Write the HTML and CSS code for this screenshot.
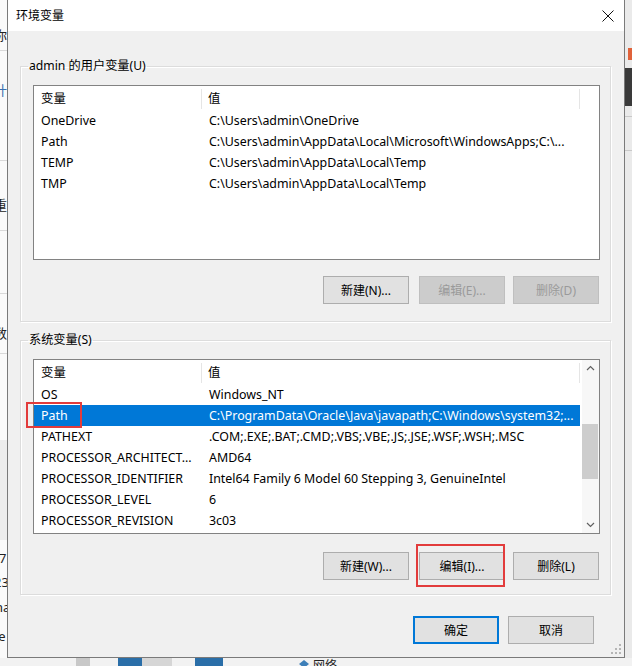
FILE: index.html
```html
<!DOCTYPE html>
<html lang="zh-CN">
<head>
<meta charset="utf-8">
<title>环境变量</title>
<link rel="stylesheet" href="styles.css">
</head>
<body>
<div class="desk">
  <div class="bg-left">
    <div class="frag f-ni">你</div>
    <div class="frag f-ji">计</div>
    <div class="frag f-zhong">重</div>
    <div class="frag f-shu">数</div>
    <div class="frag f-7">7</div>
    <div class="frag f-23">23</div>
    <div class="frag f-na">na</div>
    <div class="frag f-le">le</div>
    <div class="bl-line l1"></div>
    <div class="bl-line l2"></div>
    <div class="bl-line l3"></div>
    <div class="bl-line l4"></div>
    <div class="bl-line l5"></div>
    <div class="bl-gray"></div>
  </div>
  <div class="bg-right">
    <div class="br-red"></div>
    <div class="br-dark"></div>
    <div class="br-line r1"></div>
    <div class="br-line r2"></div>
  </div>
  <div class="bg-bottom">
    <div class="bb-block b1"></div>
    <div class="bb-block b2"></div>
    <div class="bb-block b3"></div>
    <div class="bb-block b4"></div>
    <svg class="bb-icon" width="10" height="8" viewBox="0 0 10 8"><path d="M5 0 L10 4 L5 8 L0 4 Z" fill="#3d7fb8"/></svg>
    <div class="bb-net">网络</div>
  </div>
</div>

<div class="dialog">
  <div class="titlebar">
    <span class="title">环境变量</span>
    <svg class="close" width="12" height="12" viewBox="0 0 12 12"><path d="M0.5 0.5 L11.5 11.5 M11.5 0.5 L0.5 11.5" stroke="#111" stroke-width="1" fill="none"/></svg>
  </div>
  <div class="body">
    <fieldset class="group g1">
      <legend>admin 的用户变量(U)</legend>
      <div class="list">
        <div class="row head"><div class="c1">变量</div><div class="c2">值</div></div>
        <div class="row"><div class="c1">OneDrive</div><div class="c2">C:\Users\admin\OneDrive</div></div>
        <div class="row"><div class="c1">Path</div><div class="c2">C:\Users\admin\AppData\Local\Microsoft\WindowsApps;C:\...</div></div>
        <div class="row"><div class="c1">TEMP</div><div class="c2">C:\Users\admin\AppData\Local\Temp</div></div>
        <div class="row"><div class="c1">TMP</div><div class="c2">C:\Users\admin\AppData\Local\Temp</div></div>
      </div>
      <div class="btns b-top">
        <button class="btn">新建(N)...</button>
        <button class="btn" disabled>编辑(E)...</button>
        <button class="btn" disabled>删除(D)</button>
      </div>
    </fieldset>

    <fieldset class="group g2">
      <legend>系统变量(S)</legend>
      <div class="list list2">
        <div class="rows">
          <div class="row head"><div class="c1">变量</div><div class="c2">值</div></div>
          <div class="row"><div class="c1">OS</div><div class="c2">Windows_NT</div></div>
          <div class="row sel"><div class="c1">Path</div><div class="c2">C:\ProgramData\Oracle\Java\javapath;C:\Windows\system32;...</div><span class="mark mark-path"></span></div>
          <div class="row"><div class="c1">PATHEXT</div><div class="c2">.COM;.EXE;.BAT;.CMD;.VBS;.VBE;.JS;.JSE;.WSF;.WSH;.MSC</div></div>
          <div class="row"><div class="c1">PROCESSOR_ARCHITECT...</div><div class="c2">AMD64</div></div>
          <div class="row"><div class="c1">PROCESSOR_IDENTIFIER</div><div class="c2">Intel64 Family 6 Model 60 Stepping 3, GenuineIntel</div></div>
          <div class="row"><div class="c1">PROCESSOR_LEVEL</div><div class="c2">6</div></div>
          <div class="row"><div class="c1">PROCESSOR_REVISION</div><div class="c2">3c03</div></div>
        </div>
        <div class="scrollbar">
          <svg class="arrow" width="17" height="17" viewBox="0 0 17 17"><path d="M5 10 L8.5 6.5 L12 10" stroke="#606060" stroke-width="1.2" fill="none"/></svg>
          <div class="track"><div class="thumb"></div></div>
          <svg class="arrow" width="17" height="17" viewBox="0 0 17 17"><path d="M5 7 L8.5 10.5 L12 7" stroke="#606060" stroke-width="1.2" fill="none"/></svg>
        </div>
      </div>
      <div class="btns b-bot">
        <button class="btn">新建(W)...</button>
        <button class="btn marked">编辑(I)...<span class="mark mark-edit"></span></button>
        <button class="btn">删除(L)</button>
      </div>
    </fieldset>

    <div class="footer">
      <button class="btn default">确定</button>
      <button class="btn">取消</button>
    </div>
  </div>
  <svg class="grip" width="10" height="10" viewBox="0 0 10 10" fill="#b5b5b5">
    <rect x="8" y="0" width="2" height="2"/>
    <rect x="4" y="4" width="2" height="2"/><rect x="8" y="4" width="2" height="2"/>
    <rect x="0" y="8" width="2" height="2"/><rect x="4" y="8" width="2" height="2"/><rect x="8" y="8" width="2" height="2"/>
  </svg>
</div>
</body>
</html>
```

FILE: styles.css
```css
* { box-sizing: border-box; }
html, body { margin: 0; padding: 0; }
body {
  width: 632px;
  height: 666px;
  overflow: hidden;
  position: relative;
  background: #f4f4f4;
  font-family: "Noto Sans", "Noto Sans CJK SC", sans-serif;
  font-size: 12px;
  color: #000;
}

/* ---------- background windows ---------- */
.desk { position: absolute; inset: 0; }
.bg-left {
  position: absolute; left: 0; top: 0; width: 8px; height: 666px;
  background: #fafafa; overflow: hidden;
}
.frag { position: absolute; left: -6px; font-size: 13px; color: #222; line-height: 16px; }
.f-ni { top: 27px; }
.f-ji { top: 82px; color: #3a6fb0; }
.f-zhong { top: 197px; }
.f-shu { top: 325px; }
.f-7 { top: 550px; left: -1px; }
.f-23 { top: 574px; left: -6px; }
.f-na { top: 599px; left: -5px; }
.f-le { top: 628px; left: -5px; }
.bl-line { position: absolute; left: 0; width: 8px; height: 1px; background: #d9d9d9; }
.l1 { top: 50px; } .l2 { top: 160px; } .l3 { top: 230px; } .l4 { top: 293px; } .l5 { top: 353px; }
.bl-gray { position: absolute; left: 0; top: 440px; width: 8px; height: 100px; background: #ededed; }

.bg-right {
  position: absolute; right: 0; top: 0; width: 8px; height: 666px;
  background: #eaeaea; overflow: hidden;
}
.br-red { position: absolute; left: 4px; top: 48px; width: 4px; height: 12px; background: #e0623a; }
.br-dark { position: absolute; left: 0; top: 68px; width: 8px; height: 38px; background: #3a3a3a; }
.br-line { position: absolute; left: 0; width: 8px; height: 1px; background: #c9c9c9; }
.r1 { top: 116px; } .r2 { top: 150px; }

.bg-bottom {
  position: absolute; left: 0; top: 658px; width: 632px; height: 8px; background: #f2f2f2;
  overflow: hidden;
}
.bb-block { position: absolute; top: 0; height: 8px; }
.b1 { left: 76px; width: 14px; background: #c8c8c8; }
.b2 { left: 118px; width: 24px; background: #2a6ea8; }
.b3 { left: 142px; width: 30px; background: #d6d6d6; }
.b4 { left: 195px; width: 28px; background: #2a6ea8; }
.bb-icon { position: absolute; left: 299px; top: 2px; }
.bb-net { position: absolute; left: 313px; top: 1px; font-size: 12px; line-height: 14px; color: #222; }

/* ---------- dialog ---------- */
.dialog {
  position: absolute; left: 7px; top: -1px; width: 618px; height: 659px;
  border: 1px solid #7a7a7a;
  background: #f0f0f0;
  display: flex; flex-direction: column;
}
.titlebar {
  height: 31px; background: #fff;
  display: flex; align-items: center; justify-content: space-between;
  padding: 0 10px 0 8px;
  flex: none;
}
.title { font-size: 12px; line-height: 16px; }
.close { display: block; }

.body {
  padding: 27px 13px 0 12px;
  display: flex; flex-direction: column;
}

.group {
  margin: 0; min-width: 0;
  border: 1px solid #dcdcdc;
  box-shadow: inset 1px 1px 0 #fff, 1px 1px 0 #fff;
  padding: 11px 10px 17px 12px;
}
.group legend {
  margin-left: -5px;
  padding: 0 1px;
  line-height: 16px;
  font-size: 12.2px;
}
.g2 { margin-top: 10px; padding-bottom: 14px; }

.list {
  height: 175px;
  background: #fff;
  border: 1px solid #828282;
  position: relative;
}
.list2 { display: flex; }
.rows { flex: 1; min-width: 0; }

.row {
  display: flex; height: 21px; align-items: center;
  position: relative;
  width: 546px;
  white-space: nowrap;
  line-height: 16px;
  font-size: 12.4px;
  padding-top: 1px;
}
.row.head { height: 24px; padding-top: 2px; }
.c1 { width: 168px; padding-left: 7px; overflow: hidden; flex: none; }
.c2 { width: 378px; padding-left: 7px; overflow: hidden; flex: none; }
.head .c1 { border-right: 1px solid #e5e5e5; height: 20px; line-height: 20px; }
.head .c2 { border-right: 1px solid #e5e5e5; height: 20px; line-height: 20px; padding-left: 6px; }
.row.sel { background: #0078d7; color: #fff; }

.scrollbar {
  width: 17px; flex: none;
  background: #f7f7f7;
  display: flex; flex-direction: column;
}
.arrow { display: block; flex: none; }
.track { flex: 1; padding-top: 47px; }
.thumb { margin: 0 1px 0 0; height: 55px; background: #cdcdcd; }

.btns {
  display: flex; justify-content: flex-end; gap: 8px;
  padding-right: 1px;
  margin-top: 16px;
}
.b-bot { margin-top: 18px; }

.btn {
  width: 86px; height: 28px;
  background: #e1e1e1;
  border: 1px solid #adadad;
  font-family: inherit; font-size: 12px; color: #000;
  padding: 0; margin: 0;
  position: relative;
}
.btns .btn:first-child { margin-right: 2px; }
.btn:disabled { background: #cccccc; border-color: #bfbfbf; color: #9a9a9a; }
.btn.default { border: 2px solid #0078d7; }

.footer {
  display: flex; justify-content: flex-end; gap: 9px;
  margin-top: 21px;
  padding-right: 17px;
}

.mark { position: absolute; border: 2px solid #e23c3c; pointer-events: none; }
.mark-path { left: -8px; top: -3px; width: 56px; height: 26px; }
.mark-edit { left: -4px; top: -9px; width: 89px; height: 43px; }

.grip { position: absolute; right: 3px; bottom: 3px; }
```
